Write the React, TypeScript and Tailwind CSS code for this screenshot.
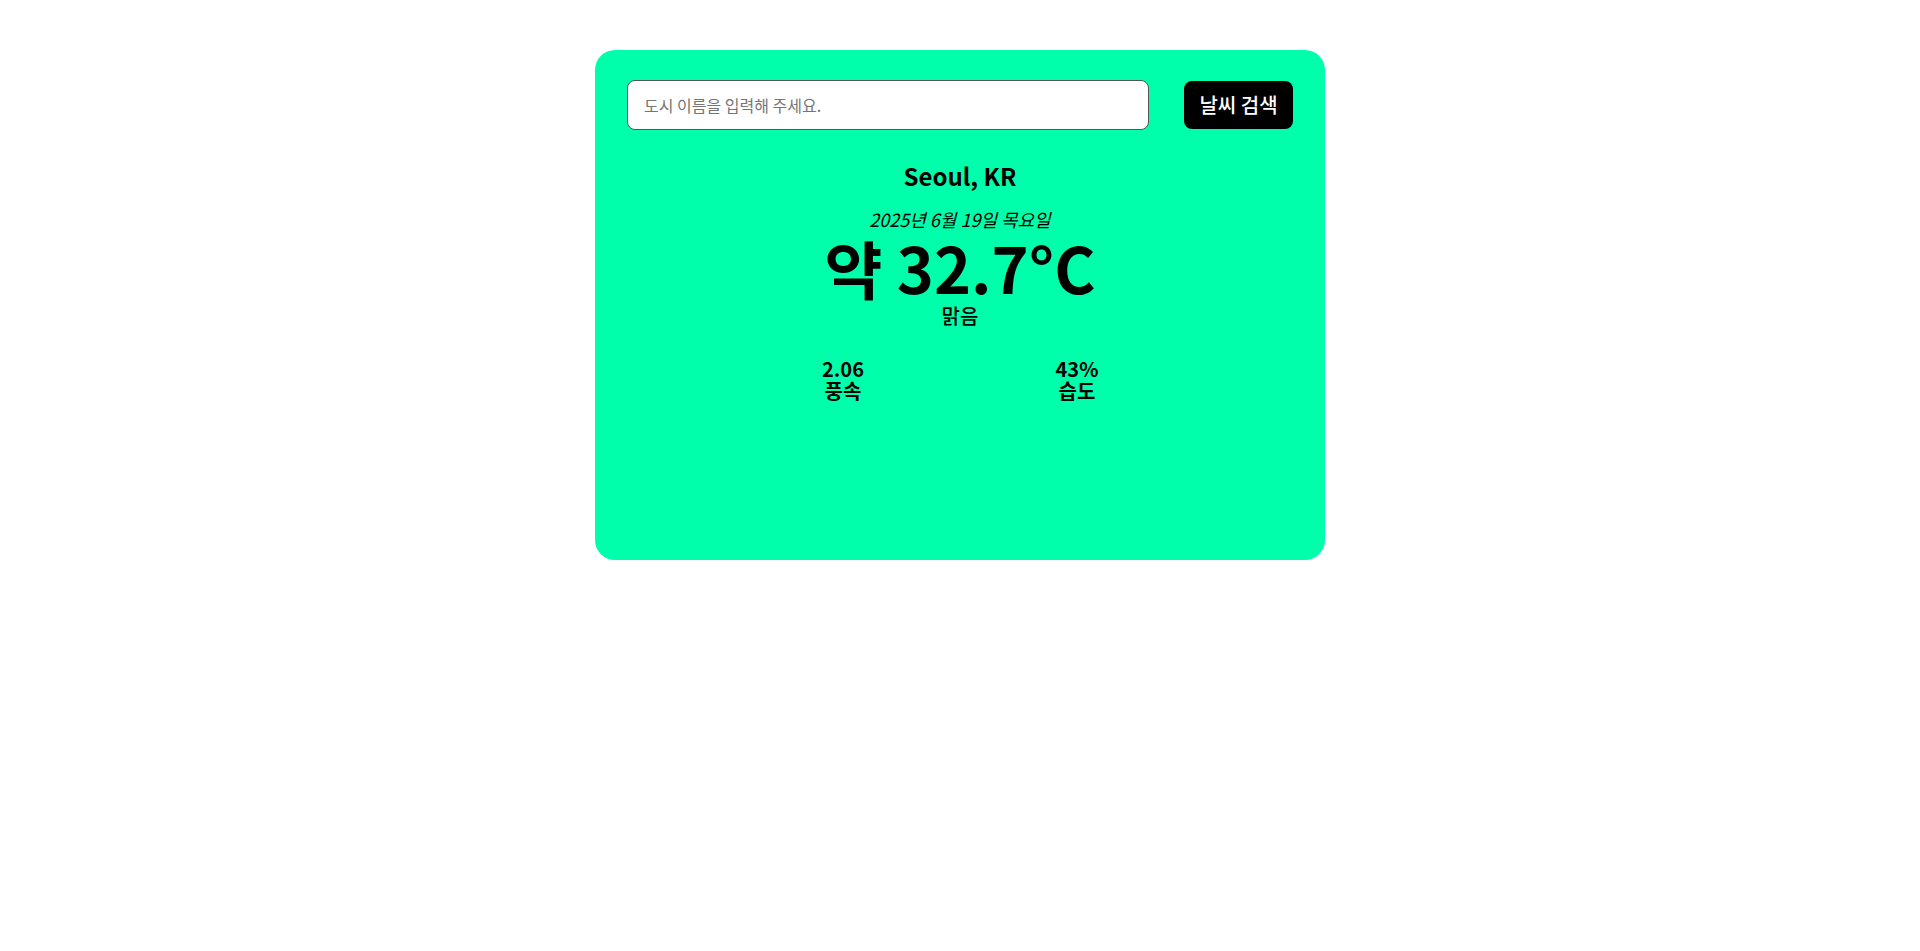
import React, { useState } from "react";

const weather = {
  city: "Seoul, KR",
  date: "2025년 6월 19일 목요일",
  temp: "약 32.7°C",
  desc: "맑음",
  stats: [
    { value: "2.06", label: "풍속" },
    { value: "43%", label: "습도" },
  ],
};

export default function App() {
  const [city, setCity] = useState("");

  return (
    <div
      className="min-h-screen w-full bg-white pt-[50px] text-black"
      style={{ fontFamily: '"Noto Sans CJK KR", "Noto Sans", sans-serif' }}
    >
      <div className="mx-auto h-[510px] w-[730px] rounded-[20px] bg-[#00ffaa] px-8 pt-[30px]">
        {/* search */}
        <form
          className="flex items-center justify-between"
          onSubmit={(e) => e.preventDefault()}
        >
          <input
            type="text"
            value={city}
            onChange={(e) => setCity(e.target.value)}
            placeholder="도시 이름을 입력해 주세요."
            className="h-[50px] w-[522px] rounded-lg border border-[#555555] bg-white px-4 text-base outline-none placeholder:text-[#757575]"
          />
          <button
            type="submit"
            className="h-[48px] w-[109px] rounded-lg bg-black text-xl font-medium text-white"
          >
            날씨 검색
          </button>
        </form>

        {/* result */}
        <div className="mt-[28px] flex flex-col items-center">
          <h2 className="text-2xl leading-9 font-bold">{weather.city}</h2>
          <p className="mt-3 text-lg leading-[27px] italic">{weather.date}</p>
          <h1 className="mt-[2px] text-[63px] leading-[64px] font-bold">
            {weather.temp}
          </h1>
          <p className="mt-[3px] text-xl leading-7 font-medium">{weather.desc}</p>

          <div className="mt-[28px] grid w-[468px] grid-cols-2">
            {weather.stats.map((s, i) => (
              <div key={i} className="flex flex-col items-center">
                <div className="text-xl leading-[22px] font-bold">{s.value}</div>
                <div className="text-xl leading-[22px] font-bold">{s.label}</div>
              </div>
            ))}
          </div>
        </div>
      </div>
    </div>
  );
}
